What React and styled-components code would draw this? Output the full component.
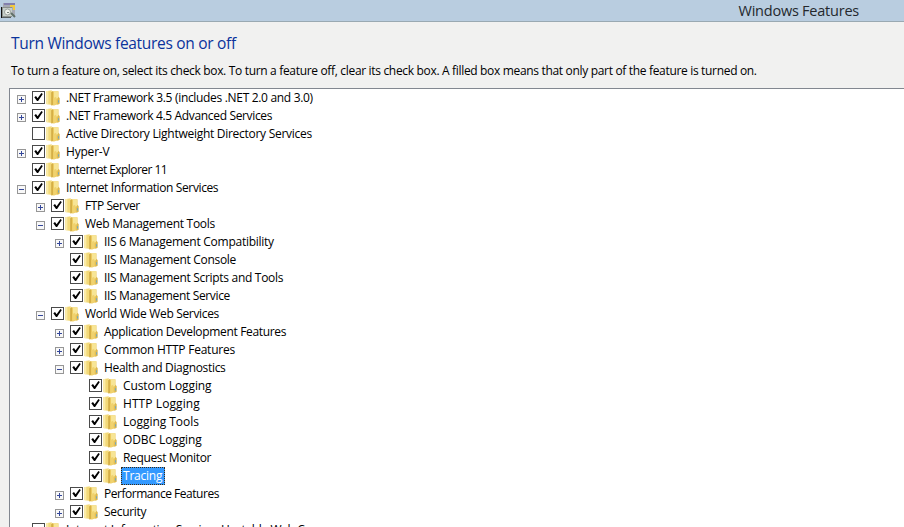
import React from "react";
import styled, { createGlobalStyle } from "styled-components";

const GlobalStyle = createGlobalStyle`
  * { box-sizing: border-box; }
  html, body { margin: 0; height: 100%; overflow: hidden; }
  #root { height: 100%; }
`;

const Window = styled.main`
  height: 527px;
  display: flex;
  flex-direction: column;
  overflow: hidden;
  background: #f1f1f0;
  color: #000;
  font-family: "Open Sans", "Noto Sans", sans-serif;
  font-size: 12px;
  white-space: nowrap;
`;

const TitleBar = styled.header`
  flex: none;
  height: 22px;
  display: flex;
  align-items: flex-start;
  justify-content: space-between;
  padding-right: 45px;
  background: #b9cde0;
  border-bottom: 1px solid #9aa9b2;
`;

const TitleText = styled.span`
  font-size: 14.5px;
  line-height: 21px;
  letter-spacing: -0.23px;
  color: #24282d;
`;

const Intro = styled.section`
  flex: none;
  height: 66px;
  padding: 10px 0 0 11px;
`;

const Heading = styled.h1`
  margin: 0;
  font-size: 15.5px;
  font-weight: 400;
  line-height: 22px;
  letter-spacing: -0.3px;
  color: #0a339c;
`;

const Description = styled.p`
  margin: 8px 0 0;
  line-height: 18px;
  letter-spacing: -0.325px;
`;

const Tree = styled.ul`
  flex: 1;
  min-height: 0;
  margin: 0 0 0 9px;
  padding: 0 0 0 7px;
  list-style: none;
  overflow: hidden;
  background: #fff;
  border: solid #828790;
  border-width: 1px 0 0 1px;
`;

const Row = styled.li`
  height: 18px;
  display: flex;
  align-items: flex-start;
  padding-left: ${(p) => p.$level * 19}px;
`;

const ExpanderSlot = styled.span`
  flex: none;
  width: 15px;
  height: 9px;
  margin-top: 6px;
`;

const CheckSlot = styled.span`
  flex: none;
  width: 13px;
  height: 13px;
  margin-top: 2px;
`;

const FolderSlot = styled.span`
  flex: none;
  width: 15px;
  height: 16px;
  margin: 1px 2px 0 0;
`;

const Icon = styled.svg`
  display: block;
`;

const Label = styled.span`
  height: 18px;
  padding: 0 2px 0 ${(p) => (p.$selected ? 1 : 2)}px;
  margin-left: 2px;
  line-height: ${(p) => (p.$selected ? 16 : 18)}px;
  letter-spacing: ${(p) => p.$spacing}px;
  color: ${(p) => (p.$selected ? "#fff" : "#000")};
  background: ${(p) => (p.$selected ? "#3399ff" : "transparent")};
  border: ${(p) => (p.$selected ? "1px dotted #3c2a14" : "none")};
`;

function AppIcon() {
  return (
    <Icon width="18" height="20" viewBox="0 0 18 20" shapeRendering="crispEdges">
      <path d="M3 3h12v13H3z" fill="#a6a9b3" />
      <path d="M4 3h11v2H4z" fill="#8380ad" />
      <path d="M10 5h5v5h-2V7h-3z" fill="#f2c93c" />
      <path d="M2 7h10v10H2z" fill="#8c918d" />
      <path d="M1 7h1v11H1z" fill="#111" />
      <path d="M2 17h9v1H2z" fill="#555d60" />
      <path d="M3 8h9v8H3z" fill="#c6cfcb" />
      <circle cx="7.5" cy="12" r="3" fill="#eef2ed" stroke="#9ca29e" shapeRendering="auto" />
      <path d="M7 12h2v1H7z" fill="#77817c" />
      <path d="M11 13l4 4" stroke="#607068" strokeWidth="2" shapeRendering="auto" />
    </Icon>
  );
}

function Expander({ open }) {
  return (
    <Icon width="9" height="9" viewBox="0 0 9 9" shapeRendering="crispEdges">
      <rect x="0.5" y="0.5" width="8" height="8" fill="#f8f8f8" stroke="#969696" />
      <path d="M2 4h5v1H2z" fill="#34479a" />
      {!open && <path d="M4 2h1v5H4z" fill="#34479a" />}
    </Icon>
  );
}

function CheckBox({ checked }) {
  return (
    <Icon width="13" height="13" viewBox="0 0 13 13">
      <rect x="0.5" y="0.5" width="12" height="12" fill="#fff" stroke="#4a4a4a" />
      {checked && <path d="M2.3 6.2L4 5l1.6 2.2L9.4 2l1.4.9-4.7 7H5z" fill="#000" />}
    </Icon>
  );
}

function Folder() {
  return (
    <Icon width="15" height="16" viewBox="0.5 1 13.3 14" preserveAspectRatio="none">
      <path d="M1.5 2l5-.8v13l-5-1z" fill="#f3d978" />
      <path d="M1.5 2l2-.3v11.9l-2-.4z" fill="#faeba8" />
      <path d="M6.5 2.2h6v11.3l-6 1z" fill="#edcb61" />
      <path d="M8.5 2h3.5v6l-3.5 1z" fill="#f7e596" />
      <path d="M6 3l1.5-1v12L6 14.5z" fill="#d3ac42" />
      <path d="M8 8l2.5-1v7l-2.5.8z" fill="#f0d26f" />
      <path d="M12.3 7l1.2 1v5l-2 .9v-4z" fill="#dcb84f" />
      <path d="M12 10h1v2h-1z" fill="#75a7bd" />
    </Icon>
  );
}

// expand: "+" collapsed, "-" expanded, "" leaf
const features = [
  { level: 0, expand: "+", checked: true, spacing: -0.32, label: ".NET Framework 3.5 (includes .NET 2.0 and 3.0)" },
  { level: 0, expand: "+", checked: true, spacing: -0.34, label: ".NET Framework 4.5 Advanced Services" },
  { level: 0, expand: "", checked: false, spacing: -0.28, label: "Active Directory Lightweight Directory Services" },
  { level: 0, expand: "+", checked: true, spacing: -0.2, label: "Hyper-V" },
  { level: 0, expand: "", checked: true, spacing: -0.55, label: "Internet Explorer 11" },
  { level: 0, expand: "-", checked: true, spacing: -0.38, label: "Internet Information Services" },
  { level: 1, expand: "+", checked: true, spacing: -0.42, label: "FTP Server" },
  { level: 1, expand: "-", checked: true, spacing: -0.27, label: "Web Management Tools" },
  { level: 2, expand: "+", checked: true, spacing: -0.26, label: "IIS 6 Management Compatibility" },
  { level: 2, expand: "", checked: true, spacing: -0.3, label: "IIS Management Console" },
  { level: 2, expand: "", checked: true, spacing: -0.3, label: "IIS Management Scripts and Tools" },
  { level: 2, expand: "", checked: true, spacing: -0.34, label: "IIS Management Service" },
  { level: 1, expand: "-", checked: true, spacing: -0.34, label: "World Wide Web Services" },
  { level: 2, expand: "+", checked: true, spacing: -0.33, label: "Application Development Features" },
  { level: 2, expand: "+", checked: true, spacing: -0.24, label: "Common HTTP Features" },
  { level: 2, expand: "-", checked: true, spacing: -0.32, label: "Health and Diagnostics" },
  { level: 3, expand: "", checked: true, spacing: -0.09, label: "Custom Logging" },
  { level: 3, expand: "", checked: true, spacing: 0.08, label: "HTTP Logging" },
  { level: 3, expand: "", checked: true, spacing: -0.03, label: "Logging Tools" },
  { level: 3, expand: "", checked: true, spacing: -0.1, label: "ODBC Logging" },
  { level: 3, expand: "", checked: true, spacing: -0.36, label: "Request Monitor" },
  { level: 3, expand: "", checked: true, spacing: -0.22, label: "Tracing", selected: true },
  { level: 2, expand: "+", checked: true, spacing: -0.47, label: "Performance Features" },
  { level: 2, expand: "+", checked: true, spacing: -0.3, label: "Security" },
  { level: 0, expand: "", checked: false, spacing: -0.38, label: "Internet Information Services Hostable Web Core" },
];

function Feature({ item }) {
  return (
    <Row $level={item.level}>
      <ExpanderSlot>{item.expand && <Expander open={item.expand === "-"} />}</ExpanderSlot>
      <CheckSlot>
        <CheckBox checked={item.checked} />
      </CheckSlot>
      <FolderSlot>
        <Folder />
      </FolderSlot>
      <Label $spacing={item.spacing} $selected={item.selected}>
        {item.label}
      </Label>
    </Row>
  );
}

export default function App() {
  return (
    <Window>
      <GlobalStyle />
      <TitleBar>
        <AppIcon />
        <TitleText>Windows Features</TitleText>
      </TitleBar>
      <Intro>
        <Heading>Turn Windows features on or off</Heading>
        <Description>
          To turn a feature on, select its check box. To turn a feature off, clear its check box. A filled box
          means that only part of the feature is turned on.
        </Description>
      </Intro>
      <Tree>
        {features.map((item) => (
          <Feature key={item.label} item={item} />
        ))}
      </Tree>
    </Window>
  );
}
